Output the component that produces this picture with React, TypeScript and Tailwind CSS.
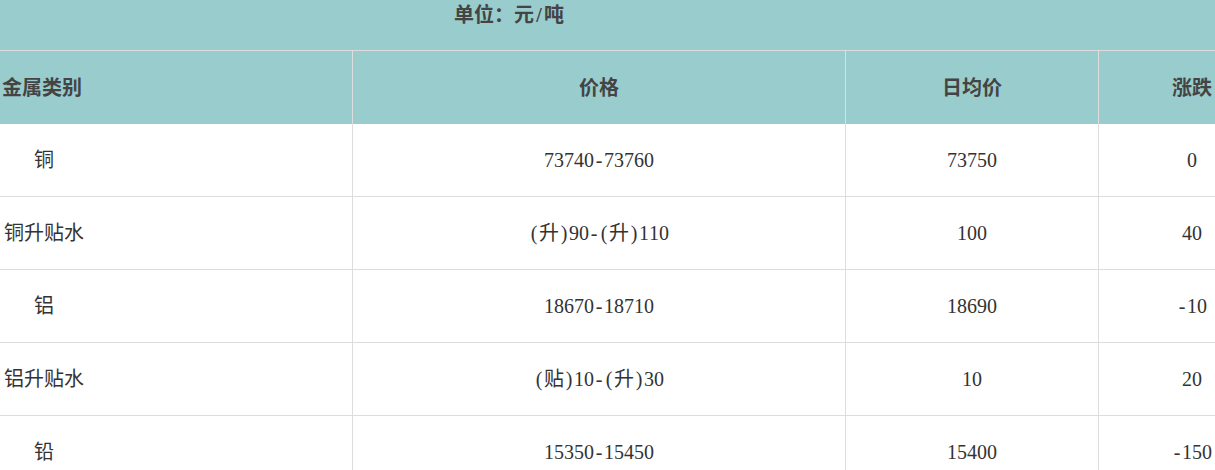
const rows = [
  { name: '铜', indent: true, price: '73740-73760', avg: '73750', change: '0' },
  { name: '铜升贴水', indent: false, price: '(升)90-(升)110', avg: '100', change: '40' },
  { name: '铝', indent: true, price: '18670-18710', avg: '18690', change: '-10' },
  { name: '铝升贴水', indent: false, price: '(贴)10-(升)30', avg: '10', change: '20' },
  { name: '铅', indent: true, price: '15350-15450', avg: '15400', change: '-150' },
]

const font = { fontFamily: '"Liberation Serif", "Noto Sans CJK SC", serif' }

// half-width punctuation gets a fixed 10px box, like the monospaced ascii in the original
function Half({ text }: { text: string }) {
  return (
    <>
      {text.split('').map((ch, i) =>
        '()-/'.includes(ch) ? (
          <span key={i} className="inline-block w-[10px] text-center">
            {ch}
          </span>
        ) : (
          <span key={i}>{ch}</span>
        ),
      )}
    </>
  )
}

export default function App() {
  return (
    <div className="w-[1215px] h-[470px] overflow-hidden bg-white text-[20px] text-[#333]" style={font}>
      <div className="w-[1285px]">
        {/* unit row */}
        <div className="flex h-[51px] items-start border-b border-[#dddddd] bg-[#99cccc] pl-[454px] font-bold text-[#444]">
          <Half text="单位：元/吨" />
        </div>

        {/* header */}
        <div className="flex h-[73px] bg-[#99cccc] font-bold text-[#444]">
          <div className="flex w-[353px] items-center border-r border-[#dddddd] pl-[2px]">金属类别</div>
          <div className="flex w-[493px] items-center justify-center border-r border-[#dddddd]">价格</div>
          <div className="flex w-[253px] items-center justify-center border-r border-[#dddddd]">日均价</div>
          <div className="flex w-[186px] items-center justify-center">涨跌</div>
        </div>

        {rows.map((r) => (
          <div key={r.name} className="flex h-[73px] border-b border-[#dddddd]">
            <div
              className={`flex w-[353px] items-center border-r border-[#dddddd] ${r.indent ? 'pl-[34px]' : 'pl-[4px]'}`}
            >
              {r.name}
            </div>
            <div className="flex w-[493px] items-center justify-center border-r border-[#dddddd]">
              <Half text={r.price} />
            </div>
            <div className="flex w-[253px] items-center justify-center border-r border-[#dddddd]">{r.avg}</div>
            <div className="flex w-[186px] items-center justify-center">
              <Half text={r.change} />
            </div>
          </div>
        ))}
      </div>
    </div>
  )
}
